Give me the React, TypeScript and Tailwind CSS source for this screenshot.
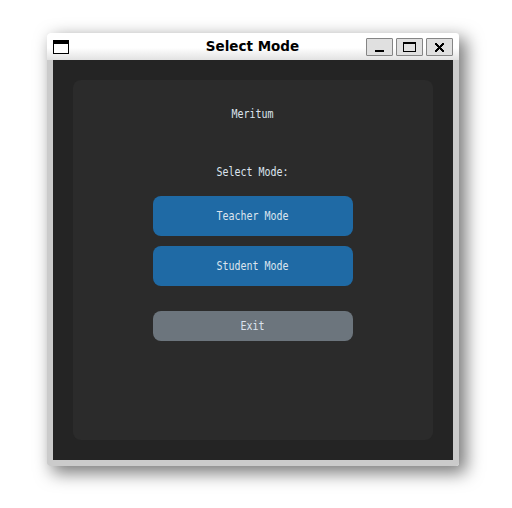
import type { ReactNode } from "react";

function BitmapText({ children }: { children: ReactNode }) {
  return (
    <span className="mt-px mr-px inline-block origin-center scale-y-[1.14] whitespace-pre font-['DejaVu_Sans_Mono',monospace] text-[10px] leading-[14px] text-[#dce4ee]">
      {children}
    </span>
  );
}

function TitleButton({ label, children }: { label: string; children: ReactNode }) {
  return (
    <button
      aria-label={label}
      className="h-[18px] w-[27px] rounded-[1px] border border-[#858585] bg-[#e0e0e0]"
    >
      <svg width="25" height="16" viewBox="0 0 25 16" shapeRendering="crispEdges" className="block">
        {children}
      </svg>
    </button>
  );
}

function TitleBar() {
  return (
    <header className="grid h-[27px] grid-cols-[87px_1fr_87px] items-center bg-linear-to-b from-white from-55% to-[#e2e2e2] px-1.5">
      <svg width="16" height="14" viewBox="0 0 16 14" shapeRendering="crispEdges" className="mt-px">
        <path d="M0 0h16v14H0z" fill="#000" />
        <path d="M1 4h14v9H1z" fill="#fff" />
      </svg>
      <h1 className="pr-px text-center font-['DejaVu_Sans',sans-serif] text-[13.5px] leading-[27px] font-bold text-black">
        Select Mode
      </h1>
      <div className="flex gap-[3px] pt-px">
        <TitleButton label="Minimize">
          <path d="M8 11h9v2H8z" fill="#000" />
        </TitleButton>
        <TitleButton label="Maximize">
          <path d="M6 3h13v10H6zM7 5v7h11V5z" fill="#000" fillRule="evenodd" />
        </TitleButton>
        <TitleButton label="Close">
          <path
            d="M8 4h2v1h1v1h1v1h1v-1h1v-1h1v-1h2v2h-1v1h-1v1h-1v1h1v1h1v1h1v2h-2v-1h-1v-1h-1v-1h-1v1h-1v1h-1v1h-2v-2h1v-1h1v-1h1v-1h-1v-1h-1v-1h-1z"
            fill="#000"
          />
        </TitleButton>
      </div>
    </header>
  );
}

export default function App() {
  return (
    <main className="h-[508px] w-[512px] overflow-hidden bg-white pt-[33px] pl-[47px]">
      <div className="w-[412px] rounded-[3px] shadow-[6px_6px_17px_1px_rgba(0,0,0,0.53)]">
        <div className="overflow-hidden rounded-[3px] bg-[#cbcbcb] pb-1.5">
          <TitleBar />
          <div className="mx-1.5 h-[400px] bg-[#242424] p-5">
            <section className="flex h-[360px] flex-col items-center rounded-[8px] bg-[#2b2b2b] pt-5">
              <div className="flex h-7 items-center">
                <BitmapText>Meritum</BitmapText>
              </div>
              <div className="mt-[30px] flex h-7 items-center">
                <BitmapText>Select Mode:</BitmapText>
              </div>
              <button className="mt-2.5 flex h-10 w-[200px] items-center justify-center rounded-[8px] bg-[#1f6aa5]">
                <BitmapText>Teacher Mode</BitmapText>
              </button>
              <button className="mt-2.5 flex h-10 w-[200px] items-center justify-center rounded-[8px] bg-[#1f6aa5]">
                <BitmapText>Student Mode</BitmapText>
              </button>
              <button className="mt-[25px] flex h-[30px] w-[200px] items-center justify-center rounded-[8px] bg-[#6c757d]">
                <BitmapText>Exit</BitmapText>
              </button>
            </section>
          </div>
        </div>
      </div>
    </main>
  );
}
